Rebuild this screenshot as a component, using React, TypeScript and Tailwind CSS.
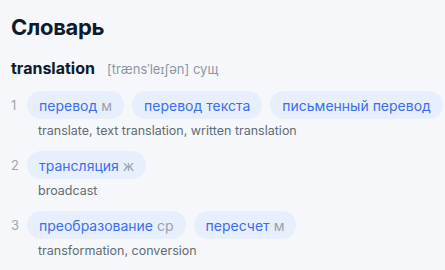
const meanings = [
  {
    n: 1,
    words: [
      { w: 'перевод', g: 'м' },
      { w: 'перевод текста' },
      { w: 'письменный перевод' },
    ],
    en: 'translate, text translation, written translation',
  },
  {
    n: 2,
    words: [{ w: 'трансляция', g: 'ж' }],
    en: 'broadcast',
  },
  {
    n: 3,
    words: [
      { w: 'преобразование', g: 'ср' },
      { w: 'пересчет', g: 'м' },
    ],
    en: 'transformation, conversion',
  },
];

export default function App() {
  return (
    <div
      className="w-[445px] h-[270px] bg-[#f5f7fa] px-[11px] pt-[12px] overflow-hidden"
      style={{ fontFamily: 'Inter, "Noto Sans", sans-serif' }}
    >
      <h1 className="text-[22px] leading-[30px] font-bold text-[#0d1b2a] tracking-[-0.3px]">Словарь</h1>

      <div className="flex items-baseline gap-[12px] mt-[14px]">
        <span className="text-[16px] font-bold text-[#0d1b2a]">translation</span>
        <span className="text-[13px] text-[#8d96a3]">[trænsˈleɪʃən] сущ</span>
      </div>

      <div className="mt-[11px] flex flex-col gap-[10px]">
        {meanings.map((m) => (
          <div key={m.n} className="flex gap-[11px]">
            <span className="w-[5px] text-[13px] leading-[28px] text-[#a0a6af]">{m.n}</span>
            <div className="flex flex-col">
              <div className="flex gap-[8px]">
                {m.words.map((x, i) => (
                  <span
                    key={i}
                    className="h-[28px] px-[12px] rounded-full bg-[#e8effc] flex items-center text-[14px] text-[#3a6df0] whitespace-nowrap"
                  >
                    {x.w}
                    {x.g && <span className="ml-[4px] text-[#9aa1ab]">{x.g}</span>}
                  </span>
                ))}
              </div>
              <div className="pl-[11px] mt-[2px] text-[12.5px] leading-[20px] text-[#626b76]">{m.en}</div>
            </div>
          </div>
        ))}
      </div>
    </div>
  );
}
